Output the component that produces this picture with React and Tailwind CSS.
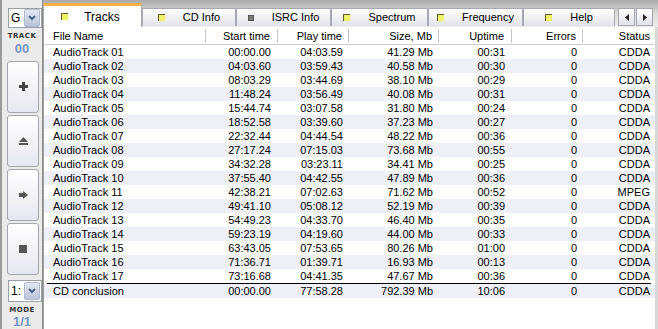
import React from 'react';

const tracks = [
  ['AudioTrack 01', '00:00.00', '04:03.59', '41.29 Mb', '00:31', '0', 'CDDA'],
  ['AudioTrack 02', '04:03.60', '03:59.43', '40.58 Mb', '00:30', '0', 'CDDA'],
  ['AudioTrack 03', '08:03.29', '03:44.69', '38.10 Mb', '00:29', '0', 'CDDA'],
  ['AudioTrack 04', '11:48.24', '03:56.49', '40.08 Mb', '00:31', '0', 'CDDA'],
  ['AudioTrack 05', '15:44.74', '03:07.58', '31.80 Mb', '00:24', '0', 'CDDA'],
  ['AudioTrack 06', '18:52.58', '03:39.60', '37.23 Mb', '00:27', '0', 'CDDA'],
  ['AudioTrack 07', '22:32.44', '04:44.54', '48.22 Mb', '00:36', '0', 'CDDA'],
  ['AudioTrack 08', '27:17.24', '07:15.03', '73.68 Mb', '00:55', '0', 'CDDA'],
  ['AudioTrack 09', '34:32.28', '03:23.11', '34.41 Mb', '00:25', '0', 'CDDA'],
  ['AudioTrack 10', '37:55.40', '04:42.55', '47.89 Mb', '00:36', '0', 'CDDA'],
  ['AudioTrack 11', '42:38.21', '07:02.63', '71.62 Mb', '00:52', '0', 'MPEG'],
  ['AudioTrack 12', '49:41.10', '05:08.12', '52.19 Mb', '00:39', '0', 'CDDA'],
  ['AudioTrack 13', '54:49.23', '04:33.70', '46.40 Mb', '00:35', '0', 'CDDA'],
  ['AudioTrack 14', '59:23.19', '04:19.60', '44.00 Mb', '00:33', '0', 'CDDA'],
  ['AudioTrack 15', '63:43.05', '07:53.65', '80.26 Mb', '01:00', '0', 'CDDA'],
  ['AudioTrack 16', '71:36.71', '01:39.71', '16.93 Mb', '00:13', '0', 'CDDA'],
  ['AudioTrack 17', '73:16.68', '04:41.35', '47.67 Mb', '00:36', '0', 'CDDA'],
];

const total = ['CD conclusion', '00:00.00', '77:58.28', '792.39 Mb', '10:06', '0', 'CDDA'];

// column widths and text alignment
const cols = [
  { w: 'w-[162px]', cls: 'pl-[9px] text-left' },
  { w: 'w-[72px]', cls: 'pr-[7px] text-right' },
  { w: 'w-[71px]', cls: 'pr-[6px] text-right' },
  { w: 'w-[90px]', cls: 'pr-[6px] text-right' },
  { w: 'w-[73px]', cls: 'pr-[7px] text-right' },
  { w: 'w-[71px]', cls: 'pr-[6px] text-right' },
  { w: 'w-[72px]', cls: 'pr-[5px] text-right' },
];

const headers = ['File Name', 'Start time', 'Play time', 'Size, Mb', 'Uptime', 'Errors', 'Status'];

function TabMark({ gray }) {
  if (gray) return <span className="shrink-0 w-[6px] h-[6px] bg-[#7a7a7a] border border-[#555]" />;
  return <span className="shrink-0 w-[7px] h-[7px] bg-[#eef36a] border-t-[1.5px] border-l-[1.5px] border-[#5e5e30]" />;
}

function Tab({ label, active, gray, w }) {
  if (active) {
    return (
      <div className={`${w} shrink-0 h-[24px] mt-[3px] bg-white border-t-[3px] border-[#f3b04a] border-x border-x-[#a9a9b0] flex items-center justify-center gap-[16px] pr-[4px] text-[12px] text-black whitespace-nowrap`}>
        <TabMark />
        <span>{label}</span>
      </div>
    );
  }
  return (
    <div className={`${w} shrink-0 h-[18px] mt-[8px] bg-gradient-to-b from-white to-[#e2e2ea] border border-[#a7a7b2] border-b-0 rounded-t-[2px] flex items-center justify-center gap-[18px] text-[11px] text-black whitespace-nowrap`}>
      <TabMark gray={gray} />
      <span>{label}</span>
    </div>
  );
}

function Combo({ value }) {
  return (
    <div className="w-[34px] h-[22px] ml-[6px] bg-white border border-[#9aa0a8] flex items-center">
      <span className="flex-1 pl-[2px] text-[12px] text-black whitespace-nowrap">{value}</span>
      <div className="shrink-0 w-[16px] h-[18px] mr-[1px] rounded-[2px] bg-gradient-to-b from-[#e4e8f4] to-[#b9c3da] border border-[#b0b8cc] flex items-center justify-center">
        <svg width="8" height="6" viewBox="0 0 8 6"><path d="M1 1l3 3 3-3" stroke="#4d6185" strokeWidth="2" fill="none" /></svg>
      </div>
    </div>
  );
}

function SideButton({ children }) {
  return (
    <div className="w-[32px] h-[52px] ml-[5px] rounded-[3px] border border-[#a6a6ae] bg-gradient-to-b from-white to-[#e7e7ef] flex items-center justify-center">
      {children}
    </div>
  );
}

function Row({ cells, alt }) {
  return (
    <div className={`flex h-[14px] items-center ${alt ? 'bg-[#efeff8]' : 'bg-white'}`}>
      {cells.map((c, i) => (
        <div key={i} className={`${cols[i].w} ${cols[i].cls} leading-[14px] whitespace-nowrap`}>{c}</div>
      ))}
    </div>
  );
}

export default function App() {
  return (
    <div className="w-[658px] h-[329px] flex overflow-hidden bg-[#ececec] font-['Liberation_Sans',Arial,sans-serif] text-[11px] text-black">
      {/* left control panel */}
      <div className="w-[43px] shrink-0 h-full border-l-2 border-[#9a9a9a] border-r border-r-[#8c8c8c] bg-[#ebebeb] flex flex-col pt-[8px]">
        <Combo value="G" />
        <div className="mt-[3px] text-center text-[7px] font-bold tracking-[0.5px] text-[#333] font-['DejaVu_Sans',sans-serif]">TRACK</div>
        <div className="text-center text-[13px] font-bold leading-[14px] text-[#7b96c4]">00</div>
        <div className="mt-[5px] flex flex-col gap-[2px]">
          <SideButton>
            <svg width="9" height="9" viewBox="0 0 9 9"><path d="M3 0h3v3h3v3H6v3H3V6H0V3h3z" fill="#444" /></svg>
          </SideButton>
          <SideButton>
            <svg width="9" height="8" viewBox="0 0 9 8"><path d="M4.5 0L9 5H0z" fill="#555" /><rect x="0" y="6" width="9" height="2" fill="#555" /></svg>
          </SideButton>
          <SideButton>
            <svg width="9" height="8" viewBox="0 0 9 8"><path d="M0 2h4V0l5 4-5 4V6H0z" fill="#555" /></svg>
          </SideButton>
          <SideButton>
            <span className="w-[8px] h-[8px] bg-[#555]" />
          </SideButton>
        </div>
        <div className="mt-[5px]"><Combo value="1:" /></div>
        <div className="mt-[3px] text-center text-[7px] font-bold tracking-[0.5px] text-[#333] font-['DejaVu_Sans',sans-serif]">MODE</div>
        <div className="text-center text-[13px] font-bold leading-[14px] text-[#7b96c4]">1/1</div>
      </div>

      {/* main area */}
      <div className="flex-1 min-w-0 flex flex-col">
        <div className="h-[27px] flex items-start bg-gradient-to-b from-[#a9a9a9] via-[#dcdcdc] to-[#ececec]">
          <Tab label="Tracks" active w="w-[99px]" />
          <Tab label="CD Info" w="w-[94px]" />
          <Tab label="ISRC Info" gray w="w-[95px]" />
          <Tab label="Spectrum" w="w-[97px]" />
          <Tab label="Frequency" w="w-[95px]" />
          <Tab label="Help" w="w-[92px]" />
          <div className="ml-[3px] mt-[8px] flex gap-[1px]">
            <div className="w-[17px] h-[18px] border border-[#a7a7b2] bg-gradient-to-b from-white to-[#e2e2ea] flex items-center justify-center">
              <svg width="4" height="7" viewBox="0 0 4 7"><path d="M4 0v7L0 3.5z" fill="#222" /></svg>
            </div>
            <div className="w-[17px] h-[18px] border border-[#a7a7b2] bg-gradient-to-b from-white to-[#e2e2ea] flex items-center justify-center">
              <svg width="4" height="7" viewBox="0 0 4 7"><path d="M0 0v7l4-3.5z" fill="#222" /></svg>
            </div>
          </div>
        </div>

        <div className="flex-1 bg-white border-l border-[#a0a0a0] border-r-[3px] border-r-[#d8d8d8] flex flex-col">
          <div className="flex h-[17px] items-center bg-white border-b border-[#d0d0d0] mt-[1px]">
            {headers.map((h, i) => (
              <div key={h} className={`${cols[i].w} ${cols[i].cls} h-[14px] leading-[14px] ${i < 6 ? 'border-r border-[#c8c8c8]' : ''}`}>{h}</div>
            ))}
          </div>
          {tracks.map((t, i) => (
            <Row key={t[0]} cells={t} alt={i % 2 === 1} />
          ))}
          <div className="ml-[3px] mr-[4px] h-px bg-black" />
          <Row cells={total} alt />
        </div>
      </div>
    </div>
  );
}
